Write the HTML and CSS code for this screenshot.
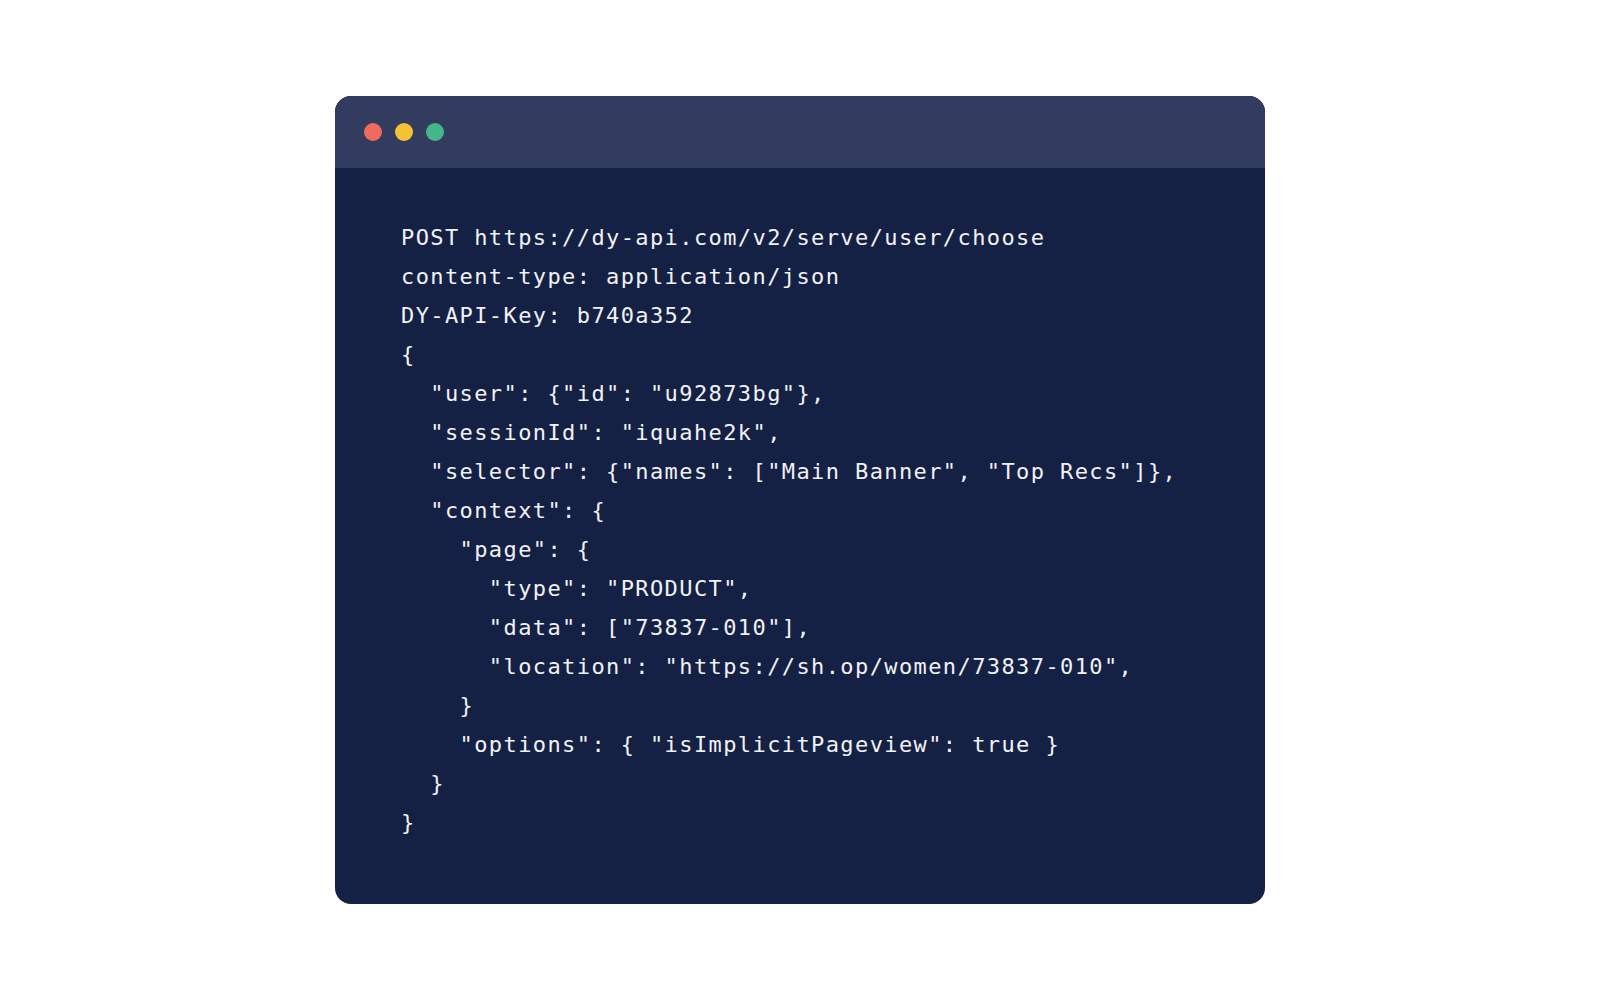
FILE: index.html
```html
<!DOCTYPE html>
<html>
<head>
<meta charset="utf-8">
<link rel="stylesheet" href="styles.css">
</head>
<body>
<div class="page">
  <div class="window">
    <div class="titlebar">
      <span class="dot dot-red"></span>
      <span class="dot dot-yellow"></span>
      <span class="dot dot-green"></span>
    </div>
    <div class="body">
<pre class="code">POST https://dy-api.com/v2/serve/user/choose
content-type: application/json
DY-API-Key: b740a352
{
  "user": {"id": "u92873bg"},
  "sessionId": "iquahe2k",
  "selector": {"names": ["Main Banner", "Top Recs"]},
  "context": {
    "page": {
      "type": "PRODUCT",
      "data": ["73837-010"],
      "location": "https://sh.op/women/73837-010",
    }
    "options": { "isImplicitPageview": true }
  }
}</pre>
    </div>
  </div>
</div>
</body>
</html>
```

FILE: styles.css
```css
html, body {
  margin: 0;
  padding: 0;
  background: #ffffff;
}

.page {
  width: 1600px;
  height: 1000px;
  padding-top: 96px;
  padding-left: 335px;
  box-sizing: border-box;
}

.window {
  width: 930px;
  height: 808px;
  border-radius: 16px;
  overflow: hidden;
  background: #152144;
  display: flex;
  flex-direction: column;
}

.titlebar {
  height: 72px;
  background: #313c5e;
  display: flex;
  align-items: center;
  gap: 13px;
  padding-left: 29px;
  flex-shrink: 0;
}

.dot {
  width: 18px;
  height: 18px;
  border-radius: 50%;
  display: block;
}

.dot-red { background: #f2695f; }
.dot-yellow { background: #f6c233; }
.dot-green { background: #45b58b; }

.body {
  flex: 1;
  padding: 50px 0 0 66px;
}

.code {
  margin: 0;
  font-family: "DejaVu Sans Mono", "Liberation Mono", monospace;
  font-size: 22px;
  letter-spacing: 1.4px;
  line-height: 39px;
  color: #f1f2f5;
  white-space: pre;
}
```
